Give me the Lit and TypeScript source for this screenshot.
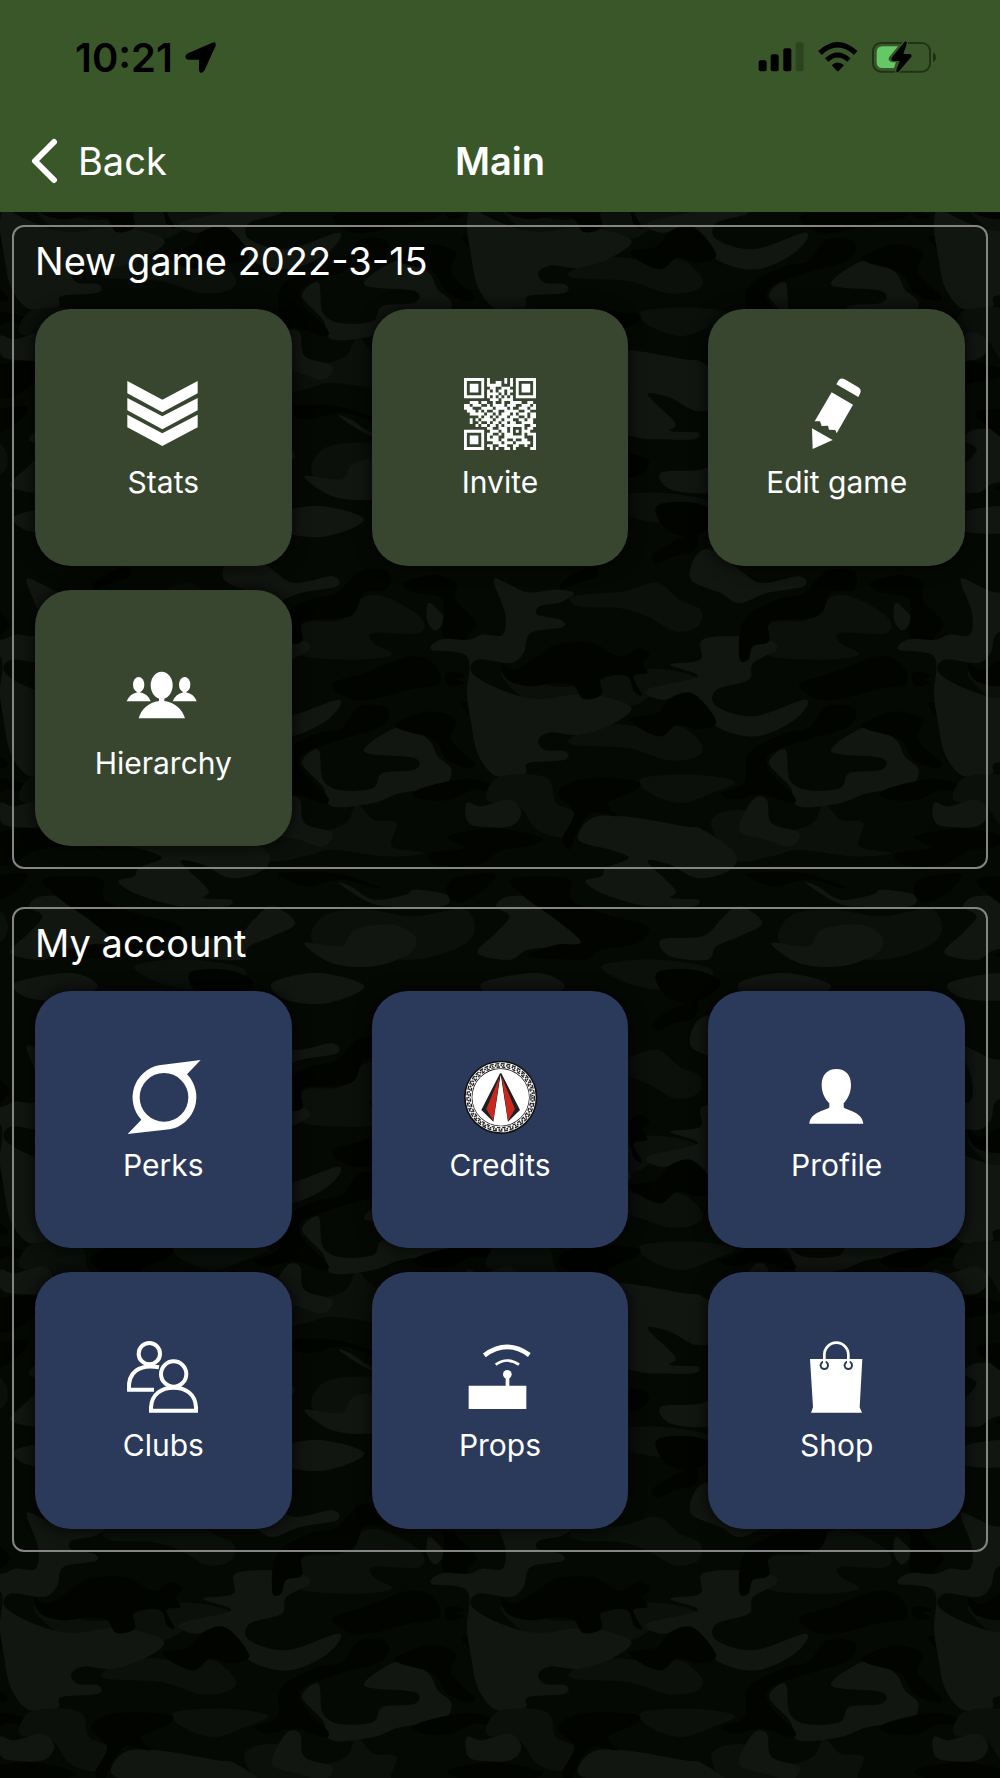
import { LitElement, html, svg, css, type SVGTemplateResult } from "lit";
import { customElement, property } from "lit/decorators.js";

type Point = [number, number];

/* One repeat of the camouflage, on a 1017 x 1401 artboard that starts at 407,418. */
const CAMO: { tone: string; blobs: Point[][] }[] = [
  {
    tone: "#0b100b",
    blobs: [
      [[640,170],[750,155],[820,130],[870,180],[915,210],[910,260],[860,275],[800,230],[740,205],[650,200]],
      [[640,590],[720,555],[780,560],[870,560],[920,620],[900,655],[840,660],[760,625],[640,615]],
      [[790,715],[900,705],[990,725],[940,760],[870,790],[800,755]],
      [[1070,250],[1150,240],[1190,180],[1240,170],[1320,230],[1320,280],[1220,280],[1220,310],[1260,345],[1180,360],[1070,350],[1060,310]],
      [[480,710],[580,715],[600,790],[640,820],[620,890],[560,870],[520,800],[450,780]],
      [[940,860],[960,820],[1020,815],[1100,870],[1160,850],[1185,795],[1220,840],[1270,850],[1260,920],[1330,940],[1250,950],[1130,930],[1070,950],[990,960]],
      [[480,400],[560,430],[640,440],[780,390],[880,400],[910,430],[830,450],[760,500],[640,490],[540,480]],
      [[1110,1130],[1200,1110],[1310,1130],[1420,1110],[1430,1200],[1300,1260],[1100,1220]],
      [[700,1280],[820,1260],[940,1290],[900,1350],[780,1340]],
    ],
  },
  {
    tone: "#121611",
    blobs: [
      [[465,120],[500,135],[540,158],[600,150],[640,160],[610,188],[565,200],[560,225],[610,240],[615,262],[545,280],[530,340],[500,370],[430,360],[418,400],[480,450],[560,478],[640,465],[700,470],[765,505],[720,555],[650,585],[590,578],[562,600],[575,630],[620,635],[620,660],[540,670],[535,700],[500,705],[465,705],[430,640],[415,540],[407,460],[407,350],[330,330],[350,300],[410,300],[440,285],[485,285],[490,220]],
      [[905,50],[940,30],[1000,90],[1050,130],[1130,110],[1140,140],[1060,160],[1000,190],[960,160],[895,120]],
      [[850,375],[915,360],[920,300],[1000,290],[1070,305],[1080,330],[1030,370],[1020,420],[950,450],[950,500],[1030,530],[1145,480],[1120,540],[1035,590],[950,560],[900,470],[830,480],[800,450],[910,410]],
      [[1065,670],[1100,630],[1110,720],[1150,752],[1220,745],[1240,700],[1310,690],[1310,655],[1200,635],[1280,560],[1340,600],[1360,650],[1390,690],[1370,740],[1280,760],[1220,790],[1130,800],[1110,740]],
      [[650,900],[680,835],[760,832],[880,860],[920,870],[990,940],[980,990],[910,1015],[850,975],[800,965],[860,1050],[850,1075],[910,1080],[900,1100],[830,1100],[780,1095],[700,1060],[665,1025],[700,1010],[710,985],[760,955],[720,930]],
      [[1000,870],[1030,780],[1060,780],[1070,850],[1130,880],[1110,920],[1060,900]],
      [[407,790],[440,800],[500,780],[525,820],[500,860],[430,860],[407,840]],
      [[1145,1030],[1170,1040],[1220,1080],[1290,1065],[1310,1050],[1380,1065],[1370,1100],[1250,1100],[1200,1080]],
      [[430,1240],[470,1180],[500,1130],[470,1100],[500,1070],[580,1080],[620,1140],[660,1200],[620,1220],[540,1230],[500,1260]],
      [[1070,1210],[1150,1220],[1180,1170],[1260,1155],[1310,1190],[1300,1240],[1220,1280],[1130,1270]],
      [[830,1200],[920,1190],[960,1140],[1000,1100],[1050,1150],[1000,1190],[950,1220],[930,1260],[850,1250]],
      [[1340,190],[1360,210],[1375,240],[1355,272],[1337,240]],
      [[440,1330],[560,1300],[620,1340],[560,1380],[470,1375]],
      [[1000,1330],[1100,1300],[1200,1340],[1120,1390],[1030,1380]],
    ],
  },
  {
    tone: "#020400",
    blobs: [
      [[480,370],[510,390],[560,350],[600,315],[680,310],[740,350],[780,325],[805,345],[790,370],[800,400],[770,410],[788,465],[770,455],[755,410],[700,415],[700,465],[660,478],[640,440],[600,430],[545,440],[495,420]],
      [[760,540],[820,520],[850,475],[900,462],[950,545],[910,570],[865,555],[825,590]],
      [[1010,240],[1080,180],[1140,160],[1190,95],[1250,95],[1250,150],[1200,160],[1170,230],[1070,245],[1065,305],[1030,320],[1020,360],[1000,355]],
      [[1285,130],[1350,105],[1400,130],[1400,180],[1445,250],[1425,290],[1435,330],[1420,343],[1395,300],[1370,285],[1370,180],[1310,160]],
      [[1132,430],[1200,400],[1300,350],[1350,370],[1365,430],[1300,450],[1200,482],[1150,465]],
      [[1378,400],[1400,398],[1420,410],[1400,418],[1418,430],[1395,440],[1378,430]],
      [[1190,500],[1250,505],[1240,560],[1150,600],[1070,640],[1065,690],[1120,770],[1110,790],[1050,765],[990,780],[960,760],[1010,730],[1020,640],[1100,580],[1150,565]],
      [[1270,550],[1340,515],[1400,540],[1390,600],[1440,670],[1425,685],[1380,660],[1350,600],[1280,570]],
      [[1305,760],[1350,735],[1430,718],[1490,740],[1490,765],[1440,750],[1390,780],[1330,780]],
      [[605,765],[630,730],[690,715],[780,725],[770,755],[715,790],[735,830],[680,820],[650,870],[630,930],[615,895],[640,820]],
      [[365,890],[470,865],[570,895],[540,920],[480,935],[430,975],[340,975],[325,940],[400,925]],
      [[500,1020],[560,1010],[630,1020],[635,1080],[700,1120],[800,1160],[780,1210],[700,1230],[660,1260],[540,1250],[600,1215],[655,1210],[610,1150],[530,1070]],
      [[1020,1000],[1140,1000],[1230,1040],[1220,1045],[1150,1020],[1080,1040],[1030,1020]],
      [[1390,1020],[1480,1000],[1470,1040],[1420,1085],[1385,1075]],
      [[815,40],[900,-20],[905,30],[860,50],[820,72]],
      [[610,150],[620,120],[680,80],[690,110],[650,130]],
      [[1410,490],[1450,500],[1470,540],[1440,540]],
      [[820,1300],[900,1290],[960,1330],[900,1390],[840,1370]],
    ],
  },
];

/* Closed Catmull-Rom curve through the points. */
function blobPath(points: Point[]): string {
  const n = points.length;
  const at = (i: number) => points[(i + n) % n];
  let d = `M${points[0].join(" ")}`;
  for (let i = 0; i < n; i++) {
    const [a, b, c, e] = [at(i - 1), at(i), at(i + 1), at(i + 2)];
    const c1 = [b[0] + (c[0] - a[0]) / 6, b[1] + (c[1] - a[1]) / 6];
    const c2 = [c[0] - (e[0] - b[0]) / 6, c[1] - (e[1] - b[1]) / 6];
    d += `C${[...c1, ...c2, ...c].map(Math.round).join(" ")}`;
  }
  return d + "Z";
}

const CAMO_PATHS = CAMO.map(({ tone, blobs }) => ({ tone, d: blobs.map(blobPath).join("") }));

const QR = [
  "1111111010000010101111111",
  "1000001010011010101000001",
  "1011101011111000101011101",
  "1011101001100111001011101",
  "1011101010101101101011101",
  "1000001011110101001000001",
  "1111111010101010101111111",
  "0000000001110111100000000",
  "0011101100100100111100110",
  "1101110010111101110011101",
  "1110001111011110100111011",
  "0111010100110011111001100",
  "0011111011010111010111011",
  "0000010110101110111001011",
  "0010101111011011100110110",
  "0010010010110110110011110",
  "0000101101101011111110011",
  "0000000011001110100010110",
  "1111111001110110101011100",
  "1000001011001011100010111",
  "1011101010110011111110001",
  "1011101011110110010011001",
  "1011101000111011101111101",
  "1000001011001110011001001",
  "1111111001010011010000011",
];

const QR_PATH = QR.flatMap((row, y) =>
  [...row].map((cell, x) => (cell === "1" ? `M${x} ${y}h1v1h-1z` : ""))
).join("");

const ICONS: Record<string, { box: string; art: SVGTemplateResult }> = {
  stats: {
    box: "0 0 216 216",
    art: svg`<path d="M1 9L106 65L212 9V46L106 103L1 46ZM1 60L106 115L212 60V97L106 154L1 97ZM1 110L106 166L212 110V148L106 204L1 148Z"/>`,
  },
  invite: {
    box: "0 0 25 25",
    art: svg`<path d=${QR_PATH}/>`,
  },
  edit: {
    box: "181 54 216 216",
    art: svg`<path d="M287 73L293 62Q300 52 312 58L353 82Q363 89 359 99L353 111ZM273 97L337 134L288 220L284 210L265 209L262 197L243 198L238 184L222 184ZM214 205L276 240L216 267Z"/>`,
  },
  hierarchy: {
    box: "142 24 216 216",
    art: svg`<ellipse cx="246" cy="103" rx="33" ry="41"/>
      <path d="M177 202Q190 158 238 150V138H254V150Q302 158 316 202Z"/>
      <ellipse cx="177" cy="101" rx="17" ry="23"/><ellipse cx="315" cy="101" rx="17" ry="23"/>
      <path d="M141 151Q150 129 173 124V118H181V124Q205 129 213 151ZM279 151Q288 129 311 124V118H319V124Q343 129 351 151Z"/>`,
  },
  perks: {
    box: "82 63 216 216",
    art: svg`<path fill-rule="evenodd" d="M303 60L262 103A98 98 0 0 1 210 268L84 282L125 239A98 98 0 0 1 178 76ZM193 99A73 73 0 1 0 193 245A73 73 0 1 0 193 99Z"/>`,
  },
  credits: {
    box: "70 63 216 216",
    art: svg`<circle cx="180" cy="172" r="110" fill="#111"/>
      <circle cx="180" cy="172" r="96" fill="none" stroke="#fff" stroke-width="18"/>
      <circle cx="180" cy="172" r="101" fill="none" stroke="#222" stroke-width="4" stroke-dasharray="12 5"/>
      <circle cx="180" cy="172" r="96" fill="none" stroke="#222" stroke-width="5" stroke-dasharray="4 5 5 3"/>
      <circle cx="180" cy="172" r="91" fill="none" stroke="#222" stroke-width="4" stroke-dasharray="10 6"/>
      <circle cx="180" cy="172" r="85" fill="#fff"/>
      <path fill="#1c2022" d="M178 100L122 210L158 245L180 104L202 245L238 210L182 100Z"/>
      <path fill="#c9281e" d="M177 110L137 207L158 243ZM183 110L223 207L202 243Z"/>
      <path fill="#fff" d="M180 108L161 246H199Z"/>`,
  },
  profile: {
    box: "61 63 216 216",
    art: svg`<path d="M167 87C195 87 211 105 211 134C211 160 200 178 189 190V202C193 210 245 215 248 251H86C89 215 142 210 146 202V190C134 178 123 160 123 134C123 105 140 87 167 87Z"/>`,
  },
  clubs: {
    box: "82 63 216 216",
    art: svg`<g fill="none" stroke="#fff" stroke-width="12">
      <circle cx="149" cy="101" r="32"/><path d="M163 209H88C84 158 118 130 178 142"/>
      <circle cx="222" cy="162" r="38"/><path d="M154 272V262C156 222 186 203 222 203C258 203 287 222 289 262V272Z"/></g>`,
  },
  props: {
    box: "70 63 216 216",
    art: svg`<path d="M84 197H195V163H206V197H257V267H84Z"/><circle cx="200" cy="163" r="13"/>
      <g fill="none" stroke="#fff"><path stroke-width="8" d="M165 134Q200 109 235 134"/><path stroke-width="14" d="M131 106Q198 56 266 105"/></g>`,
  },
  shop: {
    box: "1081 63 216 216",
    art: svg`<path d="M1108 117H1265L1257 262L1264 278H1111L1117 262Z"/>
      <g fill="#2b395b"><circle cx="1151" cy="136" r="14"/><circle cx="1223" cy="136" r="14"/></g>
      <circle cx="1151" cy="136" r="8"/><circle cx="1223" cy="136" r="8"/>
      <path fill="none" stroke="#fff" stroke-width="8" d="M1151 136V104A36 36 0 0 1 1223 104V136"/>`,
  },
};

@customElement("menu-tile")
class MenuTile extends LitElement {
  @property() icon = "";
  @property() label = "";

  static styles = css`
    :host { display: block; }
    .tile {
      display: flex;
      flex-direction: column;
      align-items: center;
      justify-content: center;
      gap: 14px;
      width: 100%;
      aspect-ratio: 1;
      padding: 4px 0 0;
      border: 0;
      border-radius: 36px;
      background: var(--tile-color);
      box-shadow: 0 0 14px 4px rgba(0, 0, 0, 0.55);
      color: #fff;
      font: 400 30px/36px Inter, "Liberation Sans", sans-serif;
      cursor: pointer;
    }
    .icon { width: 72px; height: 72px; fill: #fff; overflow: visible; }
  `;

  render() {
    const { box, art } = ICONS[this.icon];
    return html`<button class="tile" type="button">
      <svg class="icon" viewBox=${box} aria-hidden="true">${art}</svg>
      <span>${this.label}</span>
    </button>`;
  }
}

@customElement("app-root")
class AppRoot extends LitElement {
  static styles = css`
    :host {
      display: flex;
      flex-direction: column;
      min-height: 100vh;
      background: #050903;
      color: #fff;
      font-family: Inter, "Liberation Sans", sans-serif;
    }
    .header { background: #3a572a; }
    .status {
      display: flex;
      align-items: center;
      justify-content: space-between;
      height: 114px;
      padding: 0 64px 0 75px;
      color: #000;
      font-size: 40px;
      font-weight: 600;
    }
    .cluster { display: flex; align-items: center; gap: 14px; }
    .clock { gap: 12px; }
    .nav {
      display: grid;
      grid-template-columns: 1fr auto 1fr;
      align-items: center;
      height: 94px;
      padding: 0 30px 4px;
    }
    .back {
      display: flex;
      align-items: center;
      gap: 20px;
      justify-self: start;
      color: #fff;
      font-size: 38px;
      text-decoration: none;
    }
    .title { margin: 0; font-size: 38px; font-weight: 600; }
    .body { display: grid; flex: 1; }
    .camo { grid-area: 1 / 1; width: 100%; height: 100%; min-height: 0; contain: size; }
    .content {
      grid-area: 1 / 1;
      position: relative;
      display: flex;
      flex-direction: column;
      gap: 38px;
      padding: 13px 12px;
    }
    .panel {
      padding: 0 21px 21px;
      border: 2px solid #868486;
      border-radius: 12px;
    }
    .heading { margin: 0; padding: 10px 0 24px; font-size: 38px; line-height: 48px; font-weight: 400; }
    .tiles { display: grid; grid-template-columns: repeat(3, 1fr); gap: 24px 80px; }
    .green { --tile-color: #384630; }
    .blue { --tile-color: #2b395b; }
  `;

  private tiles(names: [string, string][]) {
    return names.map(([icon, label]) => html`<menu-tile .icon=${icon} .label=${label}></menu-tile>`);
  }

  render() {
    return html`
      <header class="header">
        <div class="status">
          <div class="cluster clock">
            <span>10:21</span>
            <svg width="31" height="31" viewBox="549 125 93 93" aria-hidden="true">
              <path d="M629 128Q643 121 641 136L608 209Q603 219 596 217Q591 215 591 208V178H558Q550 176 550 169Q550 163 558 159Z"/>
            </svg>
          </div>
          <div class="cluster">
            <svg width="46" height="30" viewBox="772 125 138 90" aria-hidden="true">
              <rect x="774" y="180" width="24" height="33" rx="6"/>
              <rect x="810" y="162" width="24" height="51" rx="6"/>
              <rect x="848" y="144" width="24" height="69" rx="6"/>
              <rect x="885" y="126" width="24" height="87" rx="6" opacity=".22"/>
            </svg>
            <svg width="40" height="30" viewBox="953 125 120 90" aria-hidden="true">
              <g fill="none" stroke="#000" stroke-width="16">
                <path d="M959 158Q1012 109 1066 158"/>
                <path stroke-width="15" d="M979 179Q1012 149 1046 179"/>
              </g>
              <path d="M994 195Q1012 178 1031 195L1015 212Q1012 214 1010 212Z"/>
            </svg>
            <svg width="64" height="32" viewBox="1116 121 192 96" aria-hidden="true">
              <rect x="1119" y="127" width="171" height="86" rx="24" fill="none" stroke="#000" stroke-opacity=".42" stroke-width="6"/>
              <path d="M1299 155Q1308 160 1308 170Q1308 180 1299 185Z" opacity=".45"/>
              <path fill="#65c866" d="M1148 137H1194L1167 170Q1163 182 1174 183H1188L1182 202H1148Q1130 202 1130 184V155Q1130 137 1148 137Z"/>
              <path stroke="#3a572a" stroke-width="8" paint-order="stroke" d="M1214 123Q1222 121 1220 130L1210 160H1230Q1238 163 1233 170L1196 213Q1188 219 1189 209L1199 181H1179Q1171 178 1176 170Z"/>
            </svg>
          </div>
        </div>
        <nav class="nav">
          <a class="back" href="#back">
            <svg width="28" height="46" viewBox="0 0 28 46" aria-hidden="true">
              <path d="M24 4L5 23L24 42" fill="none" stroke="#fff" stroke-width="6" stroke-linecap="round" stroke-linejoin="round"/>
            </svg>
            Back
          </a>
          <h1 class="title">Main</h1>
        </nav>
      </header>
      <main class="body">
        <svg class="camo" aria-hidden="true">
          <defs>
            <pattern id="camo" width="467" height="467" patternUnits="userSpaceOnUse"
              viewBox="407 418 1017 1401" preserveAspectRatio="none">
              ${[-1401, 0, 1401].map((dy) => [-1017, 0, 1017].map((dx) => svg`
                <g transform="translate(${dx} ${dy})">
                  ${CAMO_PATHS.map(({ tone, d }) => svg`<path fill=${tone} d=${d}/>`)}
                </g>`))}
            </pattern>
          </defs>
          <rect width="100%" height="100%" fill="url(#camo)"/>
        </svg>
        <div class="content">
          <section class="panel green">
            <h2 class="heading">New game 2022-3-15</h2>
            <div class="tiles">
              ${this.tiles([["stats", "Stats"], ["invite", "Invite"], ["edit", "Edit game"], ["hierarchy", "Hierarchy"]])}
            </div>
          </section>
          <section class="panel blue">
            <h2 class="heading">My account</h2>
            <div class="tiles">
              ${this.tiles([["perks", "Perks"], ["credits", "Credits"], ["profile", "Profile"], ["clubs", "Clubs"], ["props", "Props"], ["shop", "Shop"]])}
            </div>
          </section>
        </div>
      </main>
    `;
  }
}
